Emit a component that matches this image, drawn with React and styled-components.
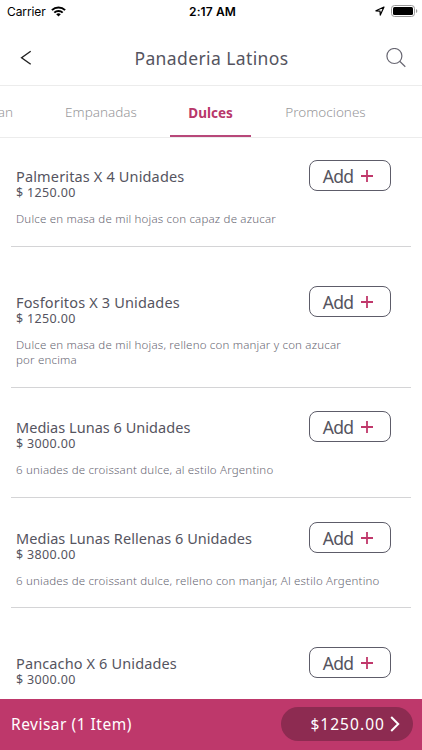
import styled, { createGlobalStyle } from "styled-components";

const products = [
  {
    name: "Palmeritas X 4 Unidades",
    price: "$ 1250.00",
    description: "Dulce en masa de mil hojas con capaz de azucar",
    height: 109,
    lead: 22,
    tracking: 0.15,
  },
  {
    name: "Fosforitos X 3 Unidades",
    price: "$ 1250.00",
    description:
      "Dulce en masa de mil hojas, relleno con manjar y con azucar\npor encima",
    height: 141,
    lead: 39,
    tracking: 0.16,
  },
  {
    name: "Medias Lunas 6 Unidades",
    price: "$ 3000.00",
    description: "6 uniades de croissant dulce, al estilo Argentino",
    height: 110,
    lead: 23,
    tracking: 0.03,
  },
  {
    name: "Medias Lunas Rellenas 6 Unidades",
    price: "$ 3800.00",
    description:
      "6 uniades de croissant dulce, relleno con manjar, Al estilo Argentino",
    height: 110,
    lead: 24,
    tracking: 0.05,
  },
  {
    name: "Pancacho X 6 Unidades",
    price: "$ 3000.00",
    height: 140,
    lead: 39,
    tracking: 0.13,
  },
];

export default function App() {
  return (
    <>
      <GlobalStyle />
      <Screen>
        <StatusBar>
          <Carrier>
            Carrier
            <svg width="15" height="11" viewBox="0 0 15 11">
              <g fill="none" stroke="#000" strokeWidth="2">
                <path d="M.9 4.1a9.4 9.4 0 0 1 13.2 0" />
                <path d="M3.3 6.6a6 6 0 0 1 8.4 0" />
              </g>
              <path d="M7.5 10.6 5.2 8.3a3.3 3.3 0 0 1 4.6 0z" />
            </svg>
          </Carrier>
          <Time>2:17 AM</Time>
          <Indicators>
            <svg width="10" height="10" viewBox="0 0 10 10">
              <path
                d="M.9 4.8 9 1 5.3 9.1 5 5.1z"
                fill="none"
                stroke="#000"
                strokeWidth="1.2"
                strokeLinejoin="round"
              />
            </svg>
            <svg width="27" height="12" viewBox="0 0 27 12">
              <rect
                x=".5"
                y=".5"
                width="23"
                height="11"
                rx="3"
                fill="none"
                stroke="#999"
              />
              <rect x="2" y="2" width="20" height="8" rx="1.5" />
              <path d="M25 4v4q1.3-.6 1.3-2T25 4" fill="#999" />
            </svg>
          </Indicators>
        </StatusBar>

        <Header>
          <IconButton aria-label="Volver">
            <svg width="12" height="16" viewBox="0 0 12 16">
              <path
                d="M10.7 1.2 1.6 7.7l9.1 6.5"
                fill="none"
                stroke="#222"
                strokeWidth="1.4"
              />
            </svg>
          </IconButton>
          <Title>Panaderia Latinos</Title>
          <IconButton aria-label="Buscar">
            <svg width="20" height="20" viewBox="0 0 20 20">
              <g fill="none" stroke="#686772" strokeWidth="1.2">
                <circle cx="8.4" cy="8" r="7.5" />
                <path d="m13.7 13.3 5.6 5.5" />
              </g>
            </svg>
          </IconButton>
        </Header>

        <Tabs>
          <Tab $width={44}>Pan</Tab>
          <Tab $width={138}>Empanadas</Tab>
          <Tab $width={81} $active>
            Dulces
          </Tab>
          <Tab $width={149}>Promociones</Tab>
        </Tabs>

        <List>
          {products.map(product => (
            <Product
              key={product.name}
              $height={product.height}
              $lead={product.lead}
            >
              <ProductTop>
                <div>
                  <Name $tracking={product.tracking}>{product.name}</Name>
                  <Price>{product.price}</Price>
                </div>
                <AddButton>
                  Add
                  <svg width="12" height="12" viewBox="0 0 12 12">
                    <path d="M0 6h12M6 0v12" stroke="#c0386b" strokeWidth="1.8" />
                  </svg>
                </AddButton>
              </ProductTop>
              <Description>{product.description}</Description>
            </Product>
          ))}
        </List>

        <Footer>
          <Review>Revisar (1 Item)</Review>
          <Total>
            $1250.00
            <svg width="10" height="16" viewBox="0 0 10 16">
              <path
                d="m1.2 1 7 7-7 7"
                fill="none"
                stroke="#fff"
                strokeWidth="2"
              />
            </svg>
          </Total>
        </Footer>
      </Screen>
    </>
  );
}

const GlobalStyle = createGlobalStyle`
  * {
    box-sizing: border-box;
  }

  body {
    margin: 0;
    background: #ffffff;
    font-family: "Noto Sans", sans-serif;
    color: #555460;
  }

  button {
    font-family: inherit;
    color: inherit;
    background: none;
    border: 0;
    padding: 0;
  }

  svg {
    display: block;
    flex: none;
  }
`;

const Screen = styled.div`
  display: flex;
  flex-direction: column;
  width: 422px;
  height: 750px;
  overflow: hidden;
`;

const StatusBar = styled.div`
  display: grid;
  grid-template-columns: 1fr auto 1fr;
  align-items: center;
  flex: none;
  height: 22px;
  padding: 0 4px 0 7px;
  font-family: Inter, sans-serif;
  font-size: 12px;
  color: #000000;
`;

const Carrier = styled.div`
  display: flex;
  align-items: center;
  gap: 5px;
  letter-spacing: -0.1px;
`;

const Time = styled.div`
  font-weight: 600;
  letter-spacing: 0.1px;
`;

const Indicators = styled.div`
  display: flex;
  align-items: center;
  justify-content: flex-end;
  gap: 6px;
  padding-bottom: 1px;
`;

const Header = styled.header`
  display: flex;
  align-items: center;
  justify-content: space-between;
  flex: none;
  height: 64px;
  padding: 8px 16px 0 20px;
  border-bottom: 1px solid #ececec;
`;

const IconButton = styled.button`
  display: flex;
`;

const Title = styled.h1`
  margin: 0;
  padding-left: 5px;
  font-size: 17.5px;
  font-weight: 400;
  letter-spacing: 0.4px;
  white-space: nowrap;
`;

const Tabs = styled.nav`
  display: flex;
  flex: none;
  height: 52px;
  margin-left: -12px;
  border-bottom: 1px solid #ececec;
`;

const Tab = styled.div`
  display: flex;
  align-items: center;
  justify-content: center;
  flex: none;
  width: ${props => props.$width}px;
  height: 51px;
  padding-top: ${props => (props.$active ? 4 : 2)}px;
  font-size: 13.5px;
  font-weight: ${props => (props.$active ? 700 : 300)};
  color: ${props => (props.$active ? "#b8376a" : "#98989b")};
  border-bottom: 2px solid ${props => (props.$active ? "#b8487a" : "transparent")};

  &:first-child {
    justify-content: flex-end;
    padding-right: 19px;
  }
`;

const List = styled.main`
  flex: 1;
  min-height: 0;
  overflow: hidden;
  padding: 0 11px;
`;

const Product = styled.article`
  height: ${props => props.$height}px;
  padding: ${props => props.$lead}px 20px 0 5px;
  border-bottom: 1px solid #d4d4d6;
`;

const ProductTop = styled.div`
  display: flex;
  justify-content: space-between;
  align-items: flex-start;
  height: 40px;
`;

const Name = styled.h2`
  margin: 7px 0 0;
  font-size: 14.5px;
  font-weight: 400;
  line-height: 18px;
  letter-spacing: ${props => props.$tracking}px;
  white-space: nowrap;
`;

const Price = styled.div`
  font-size: 12.5px;
  line-height: 15px;
  letter-spacing: 0.35px;
`;

const AddButton = styled.button`
  display: flex;
  align-items: center;
  justify-content: center;
  gap: 8px;
  width: 82px;
  height: 31px;
  padding-right: 4px;
  border: 1px solid #5d5c69;
  border-radius: 8px;
  font-size: 17.5px;
  letter-spacing: -0.7px;
`;

const Description = styled.p`
  margin: 11px 0 0;
  font-size: 11.5px;
  font-weight: 300;
  line-height: 15px;
  letter-spacing: 0.19px;
  white-space: pre;
  color: #686773;
`;

const Footer = styled.footer`
  display: flex;
  align-items: center;
  justify-content: space-between;
  flex: none;
  height: 51px;
  padding: 0 9px 2px 11px;
  background: #be386b;
  color: #ffffff;
`;

const Review = styled.span`
  font-size: 15.5px;
  letter-spacing: 0.5px;
`;

const Total = styled.button`
  display: flex;
  align-items: center;
  justify-content: flex-end;
  gap: 5px;
  width: 132px;
  height: 34px;
  padding-right: 13px;
  border-radius: 17px;
  background: #8d2b51;
  color: #ffffff;
  font-size: 15.5px;
  letter-spacing: 1.05px;
`;
